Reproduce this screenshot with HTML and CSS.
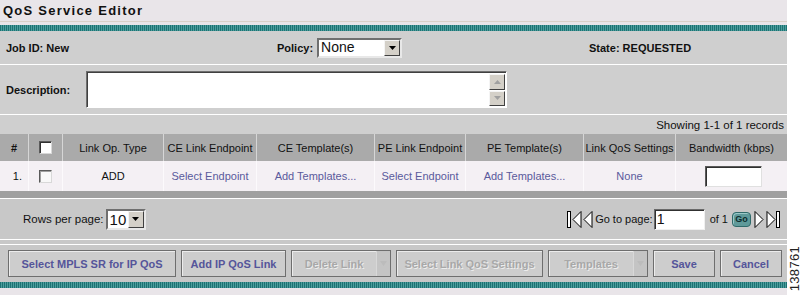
FILE: index.html
```html
<!DOCTYPE html>
<html>
<head>
<meta charset="utf-8">
<link rel="stylesheet" href="styles.css">
</head>
<body>
<div class="wrap">
  <div class="page">
    <div class="title">QoS Service Editor</div>
    <div class="stripe top"></div>
    <div class="jobrow">
      <div class="lbl">Job ID: New</div>
      <div class="policy">
        <span class="lbl">Policy:</span>
        <div class="select wide"><span class="val">None</span><span class="arrow"><svg width="7" height="4" viewBox="0 0 7 4"><path d="M0 0h7L3.5 4z" fill="#000"/></svg></span></div>
      </div>
      <div class="lbl">State: REQUESTED</div>
    </div>
    <div class="descrow">
      <div class="lbl desclbl">Description:</div>
      <div class="textarea">
        <div class="sb">
          <span class="sbtn"><svg width="7" height="4" viewBox="0 0 7 4"><path d="M3.5 0L7 4H0z" fill="#a0a0a0"/></svg></span>
          <span class="sbtn"><svg width="7" height="4" viewBox="0 0 7 4"><path d="M0 0h7L3.5 4z" fill="#a0a0a0"/></svg></span>
        </div>
      </div>
    </div>
    <div class="showing">Showing 1-1 of 1 records</div>
    <div class="grid head">
      <div class="c hash">#</div>
      <div class="c"><span class="chk hd"></span></div>
      <div class="c">Link Op. Type</div>
      <div class="c">CE Link Endpoint</div>
      <div class="c">CE Template(s)</div>
      <div class="c">PE Link Endpoint</div>
      <div class="c">PE Template(s)</div>
      <div class="c">Link QoS Settings</div>
      <div class="c">Bandwidth (kbps)</div>
    </div>
    <div class="grid row">
      <div class="c num">1.</div>
      <div class="c"><span class="chk"></span></div>
      <div class="c">ADD</div>
      <div class="c link">Select Endpoint</div>
      <div class="c link">Add Templates...</div>
      <div class="c link">Select Endpoint</div>
      <div class="c link">Add Templates...</div>
      <div class="c link">None</div>
      <div class="c"><span class="bw"></span></div>
    </div>
    <div class="darkbar"></div>
    <div class="pager">
      <div class="rpp">Rows per page:
        <div class="select small"><span class="val">10</span><span class="arrow"><svg width="7" height="4" viewBox="0 0 7 4"><path d="M0 0h7L3.5 4z" fill="#000"/></svg></span></div>
      </div>
      <div class="nav">
        <svg class="ico" width="15" height="19" viewBox="0 0 15 19"><rect x="0.5" y="1.5" width="3" height="16" fill="#fff" stroke="#000" stroke-width="1"/><path d="M14 1.5L6 9.5L14 17.5Z" fill="#fff" stroke="#000" stroke-width="1"/></svg>
        <svg class="ico" width="10" height="19" viewBox="0 0 10 19"><path d="M9 1.5L1 9.5L9 17.5Z" fill="#fff" stroke="#000" stroke-width="1"/></svg>
        <span class="gtp">Go to page:</span>
        <span class="pinput">1</span>
        <span class="of">of 1</span>
        <span class="go">Go</span>
        <svg class="ico" width="11" height="19" viewBox="0 0 11 19"><path d="M1 1.5L9 9.5L1 17.5Z" fill="#fff" stroke="#000" stroke-width="1"/></svg>
        <svg class="ico" width="15" height="19" viewBox="0 0 15 19"><path d="M1 1.5L9 9.5L1 17.5Z" fill="#fff" stroke="#000" stroke-width="1"/><rect x="10.5" y="1.5" width="3" height="16" fill="#fff" stroke="#000" stroke-width="1"/></svg>
      </div>
    </div>
    <div class="spacer"></div>
    <div class="buttons">
      <span class="btn w1">Select MPLS SR for IP QoS</span>
      <span class="btn w2">Add IP QoS Link</span>
      <span class="btn dis split w3"><span class="bl">Delete Link</span><span class="dd"><svg width="7" height="5" viewBox="0 0 7 5"><path d="M0 0h7L3.5 5z" fill="#bcbcbc"/></svg></span></span>
      <span class="btn dis w4">Select Link QoS Settings</span>
      <span class="btn dis split w5"><span class="bl">Templates</span><span class="dd"><svg width="7" height="5" viewBox="0 0 7 5"><path d="M0 0h7L3.5 5z" fill="#bcbcbc"/></svg></span></span>
      <span class="btn w6">Save</span>
      <span class="btn w7">Cancel</span>
    </div>
    <div class="stripe bottom"></div>
  </div>
  <div class="side"><span class="fig">138761</span></div>
</div>
</body>
</html>
```

FILE: styles.css
```css
* { box-sizing: border-box; }
html, body { margin: 0; padding: 0; background: #fff; }
body { font-family: "Liberation Sans", Arial, sans-serif; font-size: 11px; color: #111; }
.wrap { display: flex; width: 801px; height: 295px; overflow: hidden; }
.page { width: 787px; background: #e9e5e9; display: flex; flex-direction: column; }
.side { flex: 1; display: flex; align-items: flex-end; justify-content: center; padding-bottom: 4px; background: #fff; }
.fig { writing-mode: vertical-rl; transform: rotate(180deg); font-size: 13px; color: #222; letter-spacing: 0.3px; }

.title { height: 22px; padding: 3px 0 0 3px; font-weight: bold; font-size: 13px; letter-spacing: 1.25px; color: #111; border-bottom: 1px solid #d9d0c8; }
.stripe { height: 6px; background: repeating-linear-gradient(90deg, #1d7373 0 1px, #4d9d9d 1px 2px); }
.stripe.top { margin-top: 3px; }

.lbl { font-weight: bold; font-size: 11px; color: #111; }
.jobrow { height: 34px; background: #cfcfcf; border-bottom: 1px solid #fff; display: grid; grid-template-columns: 271px 312px 1fr; align-items: center; padding-left: 6px; }
.policy { display: flex; align-items: center; gap: 4px; }

.select { display: flex; align-items: stretch; background: #fff; border: 2px solid; border-color: #6f6f6f #e8e8e8 #e8e8e8 #6f6f6f; }
.select .val { flex: 1; font-size: 14px; padding-left: 2px; line-height: 15px; color: #111; }
.select .arrow { width: 16px; background: #d4d0c8; border: 1px solid; border-color: #f4f4f4 #404040 #404040 #f4f4f4; display: flex; align-items: center; justify-content: center; }
.select.wide { width: 85px; height: 20px; }
.select.small { width: 40px; height: 21px; margin-left: 2px; }
.select.small .val { font-size: 15px; line-height: 17px; }

.descrow { height: 50px; background: #cfcfcf; border-bottom: 1px solid #fff; display: flex; align-items: center; padding-left: 6px; }
.desclbl { width: 80px; }
.textarea { width: 421px; height: 37px; background: #fff; border: 1px solid; border-color: #6f6f6f #fff #fff #6f6f6f; box-shadow: inset 1px 1px 0 #404040; display: flex; justify-content: flex-end; padding: 2px 1px 1px 0; }
.sb { width: 16px; display: flex; flex-direction: column; gap: 1px; }
.sbtn { flex: 1; background: #d4d0c8; border: 1px solid; border-color: #f4f4f4 #404040 #404040 #f4f4f4; display: flex; align-items: center; justify-content: center; }

.showing { height: 19px; background: #cfcfcf; text-align: right; padding: 4px 3px 0 0; font-size: 11.5px; color: #111; }

.grid { display: grid; grid-template-columns: 28px 34px 101px 93px 118px 91px 118px 92px 112px; }
.grid .c { display: flex; align-items: center; justify-content: center; font-size: 11px; }
.head { height: 27px; background: #aaaaaa; color: #111; }
.head .c + .c { border-left: 1px solid #d6d6d6; }
.head .hash { font-weight: bold; }
.row { height: 30px; background: #f4f0f4; }
.row .c + .c { border-left: 1px solid #fcfafc; }
.row .num { justify-content: flex-end; padding-right: 6px; }
.link { color: #5a5a9c; }
.chk { display: inline-block; width: 13px; height: 13px; background: #f8f8f8; border: 1px solid; border-color: #5a5a5a #d8d8d8 #d8d8d8 #5a5a5a; box-shadow: inset 1px 1px 0 #a0a0a0; }
.chk.hd { background: #fff; box-shadow: inset 1px 1px 0 #303030; }
.bw { display: inline-block; width: 57px; height: 21px; background: #fff; border: 1px solid; border-color: #5a5a5a #e0e0e0 #e0e0e0 #5a5a5a; box-shadow: inset 1px 1px 0 #303030; margin-left: 4px; }

.darkbar { background: #a0a0a0; border-bottom: 1px solid #fff; height: 8px; }

.pager { height: 41px; background: #c8c8c8; border-bottom: 1px solid #fff; display: flex; align-items: center; justify-content: space-between; padding: 0 6px 0 23px; }
.rpp { display: flex; align-items: center; font-size: 11.5px; }
.nav { display: flex; align-items: center; gap: 1px; font-size: 11px; }
.gtp { margin-left: 1px; }
.of { margin-left: 2px; }
.ico { display: block; }
.pinput { width: 51px; height: 21px; background: #fff; border: 1px solid; border-color: #6a6a6a #f0f0f0 #f0f0f0 #6a6a6a; box-shadow: inset 1px 1px 0 #303030; font-size: 14px; line-height: 18px; padding-left: 2px; margin-right: 2px; }
.go { width: 19px; height: 15px; border-radius: 4px; background: #5f9a9a; border: 1px solid #2f6a6a; box-shadow: inset 1px 1px 0 #9cc8c8; font-size: 9px; font-weight: bold; color: #0d2d2d; display: flex; align-items: center; justify-content: center; margin: 0 2px 0 3px; }

.spacer { height: 5px; background: #c8c8c8; border-bottom: 1px solid #fff; }
.buttons { height: 37px; background: #c8c8c8; display: flex; align-items: center; padding: 0 0 0 8px; gap: 5px; }
.btn { height: 27px; display: flex; align-items: center; justify-content: center; background: #cdcdcd; border: 1px solid #6e6e6e; box-shadow: inset 1px 1px 0 #ececec; font-weight: bold; font-size: 11px; color: #55559a; }
.btn.dis { color: #a8a8a8; text-shadow: 1px 1px 0 #ececec; }
.split { justify-content: space-between; }
.split .bl { flex: 1; text-align: center; }
.split .dd { width: 14px; height: 100%; background: #c4c4c4; display: flex; align-items: center; justify-content: center; border-left: 1px solid #d8d8d8; }
.w1 { width: 168px; }
.w2 { width: 105px; }
.w3 { width: 100px; }
.w4 { width: 147px; }
.w5 { width: 100px; }
.w6 { width: 62px; }
.w7 { width: 62px; }
```
